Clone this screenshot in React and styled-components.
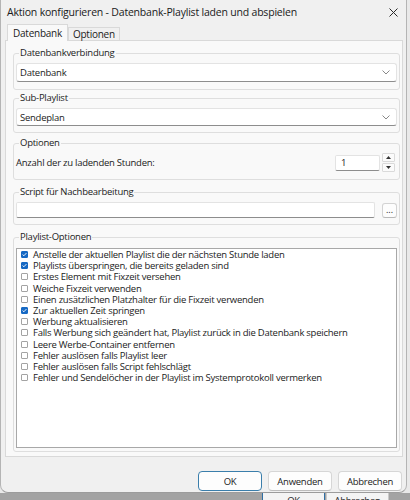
import React from "react";
import styled, { createGlobalStyle } from "styled-components";

const GlobalStyle = createGlobalStyle`
  html, body {
    margin: 0;
    padding: 0;
  }

  body {
    width: 410px;
    height: 500px;
    overflow: hidden;
    background: #e9e9e9;
    font-family: "Open Sans", "Noto Sans", sans-serif;
    font-size: 9.5px;
    letter-spacing: -0.25px;
    color: #1b1b1b;
  }
`;

const StyledScreen = styled.div`
  display: flex;
  flex-direction: column;
  width: 410px;
  height: 500px;
`;

const StyledWindow = styled.div`
  display: flex;
  flex-direction: column;
  width: 407px;
  height: 493px;
  box-sizing: border-box;
  background: #f0f0f0;
  border-left: 1px solid #b4b4b4;
  border-right: 1px solid #b4b4b4;
  border-bottom: 1px solid #9c9c9c;
  border-radius: 0 0 8px 8px;
  position: relative;
  z-index: 1;
`;

const StyledTitleBar = styled.div`
  display: flex;
  align-items: center;
  justify-content: space-between;
  height: 24px;
  padding: 0 8px 0 6px;
  font-size: 10.5px;
  letter-spacing: -0.2px;
  color: #1a1a1a;
`;

const StyledTabs = styled.div`
  display: flex;
  align-items: flex-end;
  height: 16px;
  padding-left: 6px;
`;

const StyledTab = styled.div`
  display: flex;
  align-items: center;
  box-sizing: border-box;
  height: ${(p) => (p.$active ? "17px" : "13px")};
  margin-bottom: ${(p) => (p.$active ? "-1px" : "0")};
  padding: 0 ${(p) => (p.$active ? "5px" : "4px")};
  font-size: 10px;
  background: ${(p) => (p.$active ? "#f9f9f9" : "#f0f0f0")};
  border: 1px solid #d9d9d9;
  border-bottom: none;
  position: relative;
  z-index: ${(p) => (p.$active ? 1 : 0)};
`;

const StyledTabPage = styled.div`
  display: flex;
  flex-direction: column;
  height: 417px;
  box-sizing: border-box;
  margin: 0 3px 0 4px;
  padding: 6px 2px 0 7px;
  background: #f9f9f9;
  border: 1px solid #d9d9d9;
`;

const StyledGroup = styled.fieldset`
  margin: ${(p) => p.$gap || "0"} 0 0 0;
  padding: ${(p) => p.$top || "4px"} 2px ${(p) => p.$bottom || "6px"} 2px;
  border: 1px solid #dedede;
  border-radius: 3px;
  min-width: 0;
`;

const StyledLegend = styled.legend`
  padding: 0 1px;
  margin-left: 3px;
  font-size: 9.5px;
  line-height: 12px;
`;

const StyledCombo = styled.div`
  display: flex;
  align-items: center;
  justify-content: space-between;
  height: ${(p) => p.$height || "19px"};
  box-sizing: border-box;
  padding: 0 6px 0 3px;
  background: #ffffff;
  border: 1px solid #e3e3e3;
  border-bottom: 1px solid #8d8d8d;
  border-radius: 3px;
`;

const StyledRow = styled.div`
  display: flex;
  align-items: center;
  justify-content: space-between;
  gap: 7px;
`;

const StyledInput = styled.div`
  display: flex;
  align-items: center;
  box-sizing: border-box;
  width: ${(p) => p.$width || "auto"};
  flex: ${(p) => (p.$width ? "none" : 1)};
  height: 16px;
  padding: 0 5px;
  background: #ffffff;
  border: 1px solid #e3e3e3;
  border-bottom: 1px solid #8d8d8d;
  border-radius: 2px;
`;

const StyledSpin = styled.div`
  display: flex;
  align-items: center;
  gap: 2px;
  margin-right: 2px;
`;

const StyledSpinArrows = styled.div`
  display: flex;
  flex-direction: column;
  gap: 1px;
`;

const StyledArrow = styled.div`
  display: flex;
  align-items: center;
  justify-content: center;
  width: 11px;
  height: 7px;
  background: #fbfbfb;
  border: 1px solid #dadada;
  border-radius: 1px;
`;

const StyledDots = styled.div`
  display: flex;
  align-items: flex-end;
  justify-content: center;
  box-sizing: border-box;
  width: 15px;
  height: 15px;
  padding-bottom: 3px;
  font-size: 9px;
  line-height: 9px;
  letter-spacing: 0;
  background: #fdfdfd;
  border: 1px solid #d3d3d3;
  border-bottom-color: #b8b8b8;
  border-radius: 3px;
`;

const StyledList = styled.div`
  display: flex;
  flex-direction: column;
  height: 200px;
  box-sizing: border-box;
  padding: 0 0 0 4px;
  background: #ffffff;
  border: 1px solid #a8a8a8;
`;

const StyledItem = styled.div`
  display: flex;
  align-items: center;
  gap: 5px;
  height: 11.2px;
  line-height: 11.2px;
  white-space: nowrap;
`;

const StyledCheck = styled.div`
  display: flex;
  align-items: center;
  justify-content: center;
  flex: none;
  box-sizing: border-box;
  width: 7px;
  height: 7px;
  background: ${(p) => (p.$checked ? "#1769c4" : "#ffffff")};
  border: 1px solid ${(p) => (p.$checked ? "#1769c4" : "#a3a3a3")};
  border-radius: 1px;
`;

const StyledButtons = styled.div`
  display: flex;
  justify-content: flex-end;
  gap: 6px;
  padding: 14px 4px 0 0;
`;

const StyledButton = styled.div`
  display: flex;
  align-items: center;
  justify-content: center;
  box-sizing: border-box;
  width: 64px;
  height: 20px;
  background: #fdfdfd;
  border: 1px solid ${(p) => (p.$primary ? "#3a7eab" : "#d6d6d6")};
  border-bottom-color: ${(p) => (p.$primary ? "#3a7eab" : "#bdbdbd")};
  border-radius: 4px;
`;

const StyledBehind = styled.div`
  flex: 1;
  display: flex;
  gap: 1px;
  padding-left: 262px;
  overflow: hidden;
  background: #a3a3a3;
`;

const StyledGhostButton = styled.div`
  display: flex;
  align-items: center;
  justify-content: center;
  flex: none;
  width: 61px;
  height: 20px;
  margin-top: -4px;
  background: #f4f4f4;
  border: 1px solid ${(p) => (p.$primary ? "#2f6fa5" : "#c9c9c9")};
`;

const Chevron = () => (
  <svg width="8" height="5" viewBox="0 0 8 5">
    <path d="M0.5 0.5 L4 4 L7.5 0.5" fill="none" stroke="#7a7a7a" strokeWidth="0.9" />
  </svg>
);

const Close = () => (
  <svg width="9" height="9" viewBox="0 0 9 9">
    <path d="M0.5 0.5 L8.5 8.5 M8.5 0.5 L0.5 8.5" stroke="#2a2a2a" strokeWidth="1" />
  </svg>
);

const Tick = () => (
  <svg width="6" height="5" viewBox="0 0 6 5">
    <path d="M0.7 2.6 L2.3 4 L5.3 0.8" fill="none" stroke="#ffffff" strokeWidth="1.1" />
  </svg>
);

const options = [
  ["Anstelle der aktuellen Playlist die der nächsten Stunde laden", true],
  ["Playlists überspringen, die bereits geladen sind", true],
  ["Erstes Element mit Fixzeit versehen", false],
  ["Weiche Fixzeit verwenden", false],
  ["Einen zusätzlichen Platzhalter für die Fixzeit verwenden", false],
  ["Zur aktuellen Zeit springen", true],
  ["Werbung aktualisieren", false],
  ["Falls Werbung sich geändert hat, Playlist zurück in die Datenbank speichern", false],
  ["Leere Werbe-Container entfernen", false],
  ["Fehler auslösen falls Playlist leer", false],
  ["Fehler auslösen falls Script fehlschlägt", false],
  ["Fehler und Sendelöcher in der Playlist im Systemprotokoll vermerken", false],
];

export default function App() {
  return (
    <StyledScreen>
      <GlobalStyle />
      <StyledWindow>
        <StyledTitleBar>
          <span>Aktion konfigurieren - Datenbank-Playlist laden und abspielen</span>
          <Close />
        </StyledTitleBar>

        <StyledTabs>
          <StyledTab $active>Datenbank</StyledTab>
          <StyledTab>Optionen</StyledTab>
        </StyledTabs>

        <StyledTabPage>
          <StyledGroup $bottom="7px">
            <StyledLegend>Datenbankverbindung</StyledLegend>
            <StyledCombo>
              Datenbank
              <Chevron />
            </StyledCombo>
          </StyledGroup>

          <StyledGroup $gap="2px">
            <StyledLegend>Sub-Playlist</StyledLegend>
            <StyledCombo $height="18px">
              Sendeplan
              <Chevron />
            </StyledCombo>
          </StyledGroup>

          <StyledGroup $gap="4px" $bottom="7px">
            <StyledLegend>Optionen</StyledLegend>
            <StyledRow>
              <span>Anzahl der zu ladenden Stunden:</span>
              <StyledSpin>
                <StyledInput $width="45px">1</StyledInput>
                <StyledSpinArrows>
                  <StyledArrow>
                    <svg width="5" height="3" viewBox="0 0 5 3">
                      <path d="M0 3 L2.5 0 L5 3 Z" fill="#333" />
                    </svg>
                  </StyledArrow>
                  <StyledArrow>
                    <svg width="5" height="3" viewBox="0 0 5 3">
                      <path d="M0 0 L2.5 3 L5 0 Z" fill="#333" />
                    </svg>
                  </StyledArrow>
                </StyledSpinArrows>
              </StyledSpin>
            </StyledRow>
          </StyledGroup>

          <StyledGroup $gap="6px">
            <StyledLegend>Script für Nachbearbeitung</StyledLegend>
            <StyledRow>
              <StyledInput />
              <StyledDots>...</StyledDots>
            </StyledRow>
          </StyledGroup>

          <StyledGroup $gap="6px" $top="5px" $bottom="3px">
            <StyledLegend>Playlist-Optionen</StyledLegend>
            <StyledList>
              {options.map(([label, checked]) => (
                <StyledItem key={label}>
                  <StyledCheck $checked={checked}>{checked && <Tick />}</StyledCheck>
                  <span>{label}</span>
                </StyledItem>
              ))}
            </StyledList>
          </StyledGroup>
        </StyledTabPage>

        <StyledButtons>
          <StyledButton $primary>OK</StyledButton>
          <StyledButton>Anwenden</StyledButton>
          <StyledButton>Abbrechen</StyledButton>
        </StyledButtons>
      </StyledWindow>

      <StyledBehind>
        <StyledGhostButton $primary>OK</StyledGhostButton>
        <StyledGhostButton>Abbrechen</StyledGhostButton>
      </StyledBehind>
    </StyledScreen>
  );
}
